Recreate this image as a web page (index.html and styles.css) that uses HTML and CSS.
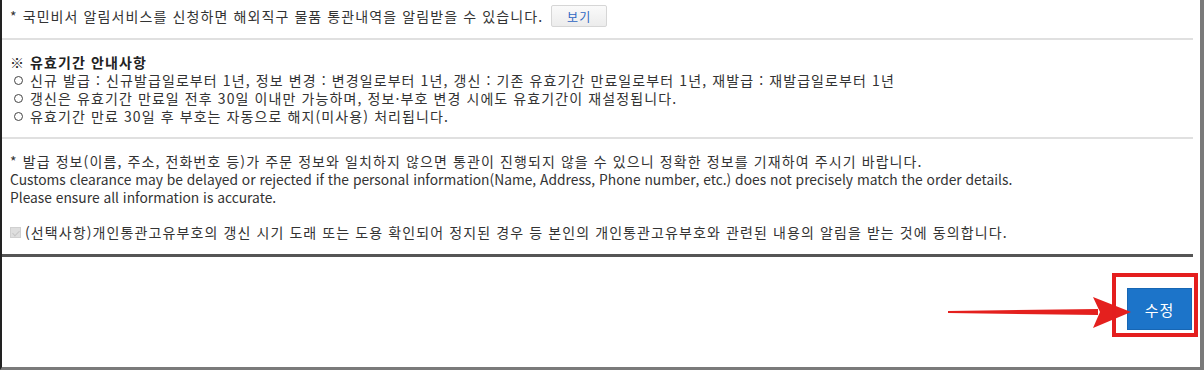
FILE: index.html
```html
<!DOCTYPE html>
<html lang="ko">
<head>
	<meta charset="UTF-8">
	<title>개인통관고유부호 수정</title>
	<link rel="stylesheet" href="styles.css">
</head>
<body>
	<div class="frame">
		<div class="notice-row">
			<span>* 국민비서 알림서비스를 신청하면 해외직구 물품 통관내역을 알림받을 수 있습니다.</span>
			<button type="button" class="btn-view">보기</button>
		</div>
		<div class="validity">
			<p class="validity-title">※ 유효기간 안내사항</p>
			<ul class="validity-list">
				<li>신규 발급 : 신규발급일로부터 1년, 정보 변경 : 변경일로부터 1년, 갱신 : 기존 유효기간 만료일로부터 1년, 재발급 : 재발급일로부터 1년</li>
				<li>갱신은 유효기간 만료일 전후 30일 이내만 가능하며, 정보·부호 변경 시에도 유효기간이 재설정됩니다.</li>
				<li>유효기간 만료 30일 후 부호는 자동으로 해지(미사용) 처리됩니다.</li>
			</ul>
		</div>
		<div class="agree">
			<p class="agree-text">* 발급 정보(이름, 주소, 전화번호 등)가 주문 정보와 일치하지 않으면 통관이 진행되지 않을 수 있으니 정확한 정보를 기재하여 주시기 바랍니다.<br>
			<span class="en">Customs clearance may be delayed or rejected if the personal information(Name, Address, Phone number, etc.) does not precisely match the order details.<br>
			Please ensure all information is accurate.</span></p>
			<label class="agree-check"><span class="chk"></span>(선택사항)개인통관고유부호의 갱신 시기 도래 또는 도용 확인되어 정지된 경우 등 본인의 개인통관고유부호와 관련된 내용의 알림을 받는 것에 동의합니다.</label>
		</div>
		<div class="actions">
			<svg class="arrow" width="195" height="45" viewBox="0 0 195 45">
				<polygon points="8,21 158,19 158,25 8,23" fill="#e4201e"/>
				<polygon points="153,7 191,22 153,38 160,22" fill="#e4201e"/>
			</svg>
			<button type="button" class="btn-save">수정</button>
			<div class="mark"></div>
		</div>
	</div>
</body>
</html>
```

FILE: styles.css
```css
*{box-sizing: border-box;}
body{margin: 0;background: #fff;font-family: "Noto Sans CJK KR", "Noto Sans", sans-serif;font-size: 14px;color: #333;letter-spacing: 1.1px;}
p,ul{margin: 0;padding: 0;}
.en{font-size: 13.8px;letter-spacing: 0;}

.frame{width: 1204px;height: 370px;border-left: 2px solid #222;border-right: 4px solid #7a7a7a;border-bottom: 3px solid #7a7a7a;display: flex;flex-direction: column;}

.notice-row{display: flex;align-items: center;height: 40px;margin-right: 7px;padding: 0 0 6px 8px;border-bottom: 2px solid #e0e0e0;}
.btn-view{margin-left: 8px;width: 56px;height: 22px;padding: 0;border: 1px solid #d6d6d6;border-radius: 2px;background: linear-gradient(#fafafa, #ececec);color: #2f66c2;font-family: inherit;font-size: 12px;letter-spacing: 1px;}

.validity{margin-right: 7px;padding: 13px 0 12px 8px;border-bottom: 2px solid #e0e0e0;line-height: 18px;}
.validity-title{font-weight: bold;color: #222;}
.validity-list{list-style: none;}
.validity-list li{padding-left: 2px;}
.validity-list li::before{content: "";display: inline-block;width: 7px;height: 7px;margin: 0 7px 1px 2px;border: 1.3px solid #444;border-radius: 50%;}

.agree{margin-right: 7px;padding: 13px 0 13px 8px;border-bottom: 3px solid #555;line-height: 18px;}
.agree-check{display: flex;align-items: center;margin-top: 17px;}
.chk{position: relative;flex: none;width: 11px;height: 11px;margin-right: 4px;background: #dedede;border: 1px solid #d0d0d0;}
.chk::after{content: "";position: absolute;left: 3px;top: 1px;width: 3px;height: 6px;border: solid #c6c6c6;border-width: 0 1px 1px 0;transform: rotate(45deg);}

.actions{position: relative;flex: 1;display: flex;justify-content: flex-end;align-items: flex-start;padding: 31px 8px 0 0;}
.btn-save{width: 65px;height: 42px;border: 1px solid #1766b4;background: #1c74c9;color: #fff;font-family: inherit;font-size: 15px;letter-spacing: 1px;}
.mark{position: absolute;right: 2px;top: 16px;width: 86px;height: 64px;border: 4px solid #e41e1e;}
.arrow{position: absolute;left: 938px;top: 33px;}
```
